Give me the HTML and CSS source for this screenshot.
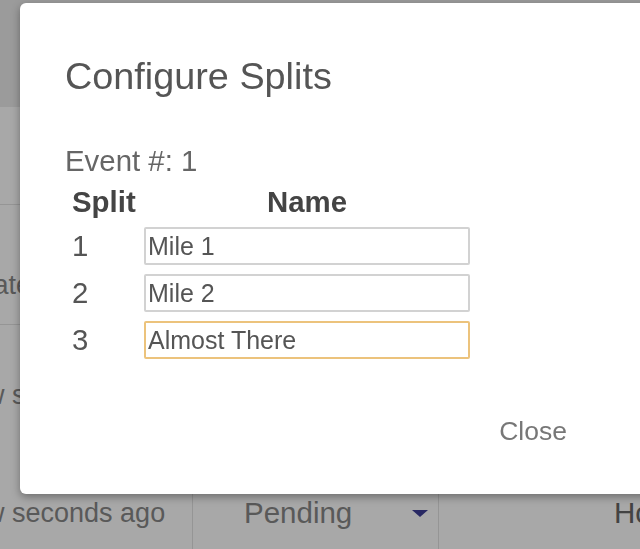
FILE: index.html
```html
<!DOCTYPE html>
<html lang="en">
<head>
  <meta charset="UTF-8">
  <meta name="viewport" content="width=device-width, initial-scale=1.0">
  <title>Configure Splits</title>
  <link rel="stylesheet" href="styles.css">
</head>
<body>
  <div class="page">
    <div class="topbar"></div>
    <div class="list">
      <div class="row row-first"></div>
      <div class="row row-update"><span class="shift">Update</span></div>
      <div class="row row-plain">a few seconds ago</div>
      <div class="row row-last">
        <div class="cell">a few seconds ago</div>
        <div class="cell cell-status">
          <span>Pending</span>
          <span class="caret"></span>
        </div>
        <div class="cell cell-more">Home</div>
      </div>
    </div>
  </div>

  <div class="backdrop"></div>

  <div class="modal">
    <div class="modal-header">
      <h4 class="modal-title">Configure Splits</h4>
    </div>
    <div class="modal-body">
      <div class="event">Event #: 1</div>
      <table class="splits">
        <thead>
          <tr>
            <th class="col-split">Split</th>
            <th class="col-name">Name</th>
          </tr>
        </thead>
        <tbody>
          <tr>
            <td class="num">1</td>
            <td><input type="text" class="split-input" value="Mile 1"></td>
          </tr>
          <tr>
            <td class="num">2</td>
            <td><input type="text" class="split-input" value="Mile 2"></td>
          </tr>
          <tr>
            <td class="num">3</td>
            <td><input type="text" class="split-input focused" value="Almost There"></td>
          </tr>
        </tbody>
      </table>
    </div>
    <div class="modal-footer">
      <button class="btn-close">Close</button>
    </div>
  </div>
</body>
</html>
```

FILE: styles.css
```css
html, body {
  margin: 0;
  padding: 0;
  overflow: hidden;
}
body {
  font-family: "Liberation Sans", Arial, sans-serif;
  background-color: #fff;
  color: #333;
  width: 640px;
  height: 549px;
}

/* page behind the dialog */
.page {
  margin-left: -80px;
  width: 800px;
}
.topbar {
  height: 107px;
  background-color: #ececec;
}
.row {
  box-sizing: border-box;
  height: 120px;
  padding: 58px 0 0 20px;
  font-size: 27px;
  line-height: 30px;
  color: #888;
  border-bottom: 1px solid #e2e2e2;
  white-space: nowrap;
}
.row-first {
  height: 98px;
  padding: 0;
}
.row-update {
  padding-top: 65px;
}
.row-plain {
  border-bottom: none;
  padding-top: 55px;
}
.shift {
  padding-left: 4px;
}
.row-last {
  display: grid;
  grid-template-columns: 272px 247px 1fr;
  height: 120px;
  padding: 0;
}
.cell {
  padding: 53px 0 0 20px;
}
.cell-status {
  display: flex;
  align-items: flex-start;
  padding: 53px 10px 0 51px;
  font-size: 29.5px;
  border-left: 1px solid #e2e2e2;
  border-right: 1px solid #e2e2e2;
}
.caret {
  margin-left: auto;
  margin-top: 12px;
  width: 0;
  height: 0;
  border-left: 8px solid transparent;
  border-right: 8px solid transparent;
  border-top: 7px solid #3e3e96;
}
.cell-more {
  padding-left: 175px;
  font-size: 29.5px;
  color: #666;
}

.backdrop {
  position: fixed;
  top: 0;
  left: 0;
  right: 0;
  bottom: 0;
  background-color: rgba(0, 0, 0, 0.34);
}

/* dialog */
.modal {
  position: absolute;
  top: 3px;
  left: 20px;
  width: 660px;
  height: 491px;
  box-sizing: border-box;
  background-color: #fff;
  border-radius: 6px;
  box-shadow: 0 3px 9px rgba(0, 0, 0, 0.35);
}
.modal-header {
  padding: 53px 45px 0;
}
.modal-title {
  margin: 0;
  font-size: 37.8px;
  font-weight: normal;
  line-height: 41.6px;
  color: #555;
}
.modal-body {
  padding: 43px 45px 0;
}
.event {
  font-size: 29.4px;
  line-height: 40px;
  color: #666;
}
.splits {
  border-collapse: collapse;
  table-layout: fixed;
}
.splits th, .splits td {
  padding: 0 7px;
  font-size: 29.4px;
  color: #555;
}
.splits th {
  height: 42px;
  color: #444;
  font-weight: bold;
}
.splits td {
  height: 47px;
}
.splits .col-split, .splits .num {
  width: 65px;
  padding: 0 0 0 7px;
  text-align: left;
}
.col-name {
  width: 326px;
  text-align: center;
}
.split-input {
  display: block;
  box-sizing: border-box;
  width: 326px;
  height: 38px;
  margin: 0;
  padding: 0 2px;
  font-family: "Liberation Sans", Arial, sans-serif;
  font-size: 25px;
  color: #555;
  background-color: #fff;
  border: 2px solid #d2d2d2;
  border-radius: 2px;
  outline: none;
}
.split-input.focused {
  border-color: #ecc37c;
}
.modal-footer {
  display: flex;
  justify-content: flex-end;
  padding: 47px 113px 0 0;
}
.btn-close {
  padding: 0;
  font-family: "Liberation Sans", Arial, sans-serif;
  font-size: 26.5px;
  line-height: 40px;
  color: #777;
  background: none;
  border: none;
  cursor: pointer;
}
```
